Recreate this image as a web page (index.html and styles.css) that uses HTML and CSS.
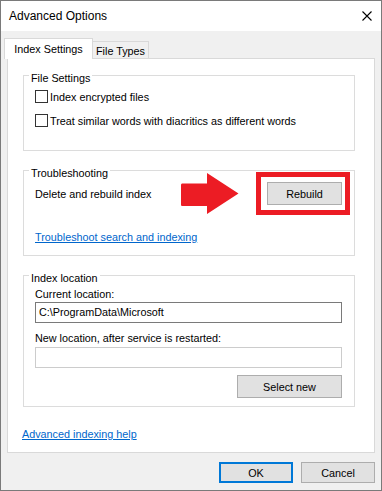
FILE: index.html
```html
<!DOCTYPE html>
<html lang="en">
<head>
  <meta charset="UTF-8" />
  <meta name="viewport" content="width=device-width, initial-scale=1.0"/>
  <title>Advanced Options</title>
  <link rel="stylesheet" href="styles.css">
</head>
<body>
  <div class="window">
    <div class="titlebar">
      <span class="title">Advanced Options</span>
      <svg class="close" width="10" height="10" viewBox="0 0 10 10">
        <path d="M0.5 0.5L9.5 9.5M9.5 0.5L0.5 9.5" stroke="#000" stroke-width="1.1" fill="none"/>
      </svg>
    </div>

    <div class="client">
      <div class="tabs">
        <div class="tab active">Index Settings</div>
        <div class="tab">File Types</div>
      </div>

      <div class="panel">
        <fieldset class="group group-files">
          <legend>File Settings</legend>
          <label class="check"><span class="box"></span>Index encrypted files</label>
          <label class="check"><span class="box"></span>Treat similar words with diacritics as different words</label>
        </fieldset>

        <fieldset class="group group-trouble">
          <legend>Troubleshooting</legend>
          <div class="rebuild-row">
            <span class="rebuild-text">Delete and rebuild index</span>
            <svg class="arrow" width="58" height="41" viewBox="0 0 58 41">
              <path d="M1 10.5Q0 10.5 0 12V31.5Q0 33 1 33H26V41L57.5 20.5L26 0V10.5Z" fill="#ec1c24"/>
            </svg>
            <div class="highlight">
              <button class="btn">Rebuild</button>
            </div>
          </div>
          <a class="link" href="#">Troubleshoot search and indexing</a>
        </fieldset>

        <fieldset class="group group-location">
          <legend>Index location</legend>
          <div class="field-label">Current location:</div>
          <div class="textbox">C:\ProgramData\Microsoft</div>
          <div class="field-label second">New location, after service is restarted:</div>
          <div class="textbox disabled"></div>
          <div class="actions">
            <button class="btn wide">Select new</button>
          </div>
        </fieldset>

        <a class="link help" href="#">Advanced indexing help</a>
      </div>

      <div class="footer">
        <button class="btn dialog default">OK</button>
        <button class="btn dialog">Cancel</button>
      </div>
    </div>
  </div>
</body>
</html>
```

FILE: styles.css
```css
* {
  box-sizing: border-box;
}
body {
  margin: 0;
  font-family: "Liberation Sans", Arial, sans-serif;
  font-size: 10.8px;
  line-height: 16px;
  color: #000;
}
.window {
  width: 382px;
  height: 491px;
  border: 1px solid #7a7a7a;
  display: flex;
  flex-direction: column;
  background: #f0f0f0;
}
.titlebar {
  height: 30px;
  background: #fff;
  display: flex;
  align-items: center;
  justify-content: space-between;
  padding: 0 9px 0 8px;
}
.title {
  font-size: 12px;
}
.close {
  display: block;
}
.client {
  flex: 1;
  padding: 7px 6px 0;
}

/* tabs */
.tabs {
  display: flex;
  align-items: flex-end;
  height: 20px;
  margin-left: -3px;
}
.tab {
  height: 17px;
  width: 56px;
  border: 1px solid #d9d9d9;
  border-bottom: none;
  border-left: none;
  background: #f0f0f0;
  display: flex;
  align-items: center;
  justify-content: center;
  padding-top: 1px;
}
.tab.active {
  height: 21px;
  width: 89px;
  border-left: 1px solid #d9d9d9;
  background: #fff;
  margin-bottom: -1px;
  padding-top: 0;
  position: relative;
  z-index: 1;
}
.panel {
  background: #fff;
  border: 1px solid #d9d9d9;
  padding: 6px 19px 10px 15px;
}

/* group boxes */
.group {
  margin: 0;
  min-width: 0;
  border: 1px solid #dcdcdc;
  padding: 0 12px 0 11px;
}
.group + .group {
  margin-top: 9px;
}
.group legend {
  padding: 5px 2px 0;
  margin-left: -6px;
  line-height: 16px;
}
.group-files {
  padding-top: 3px;
  padding-bottom: 22px;
}
.check {
  display: flex;
  align-items: center;
  gap: 2px;
  height: 15px;
}
.check + .check {
  margin-top: 9px;
}
.box {
  width: 13px;
  height: 13px;
  border: 1px solid #333;
  background: #fff;
}
.group-trouble {
  padding-top: 1px;
  padding-bottom: 10px;
}
.rebuild-row {
  display: flex;
  align-items: center;
  height: 23px;
}
.rebuild-text {
  flex: 1;
}
.arrow {
  display: block;
  margin-right: 17px;
  flex-shrink: 0;
}
.highlight {
  border: 5px solid #ec1c24;
  padding: 5px 3px 5px 6px;
  margin-right: -8px;
}
.link {
  display: inline-block;
  color: #0066cc;
  text-decoration: underline;
}
.group-trouble .link {
  margin-top: 24px;
}
.group-location {
  padding-bottom: 8px;
}
.field-label.second {
  margin-top: 7px;
}
.textbox {
  height: 21px;
  border: 1px solid #7a7a7a;
  background: #fff;
  padding: 0 3px;
  line-height: 19px;
}
.textbox.disabled {
  border-color: #cccccc;
  margin-top: 1px;
}
.actions {
  display: flex;
  justify-content: flex-end;
  margin-top: 7px;
}
.link.help {
  margin-top: 19px;
  margin-left: -1px;
}

/* buttons */
.btn {
  display: block;
  width: 75px;
  height: 23px;
  padding: 0;
  background: #e1e1e1;
  border: 1px solid #adadad;
  font: inherit;
  color: #000;
}
.btn.wide {
  width: 105px;
}
.footer {
  display: flex;
  justify-content: flex-end;
  gap: 8px;
  margin-top: 9px;
}
.btn.dialog {
  width: 74px;
  height: 21px;
}
.btn.default {
  border: 2px solid #0078d7;
}
```
